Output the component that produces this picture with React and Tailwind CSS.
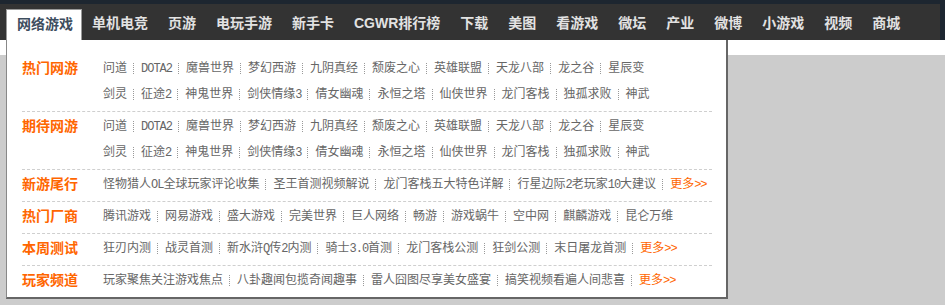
import React from 'react'

const NAV = ['单机电竞', '页游', '电玩手游', '新手卡', 'CGWR排行榜', '下载', '美图', '看游戏', '微坛', '产业', '微博', '小游戏', '视频', '商城']

const HOT_LINE1 = ['问道', 'DOTA2', '魔兽世界', '梦幻西游', '九阴真经', '颓废之心', '英雄联盟', '天龙八部', '龙之谷', '星辰变']
const HOT_LINE2 = ['剑灵', '征途2', '神鬼世界', '剑侠情缘3', '倩女幽魂', '永恒之塔', '仙侠世界', '龙门客栈', '独孤求败', '神武']

const SECTIONS = [
  { label: '热门网游', lines: [HOT_LINE1, HOT_LINE2] },
  { label: '期待网游', lines: [HOT_LINE1, HOT_LINE2] },
  { label: '新游尾行', lines: [['怪物猎人OL全球玩家评论收集', '圣王首测视频解说', '龙门客栈五大特色详解', '行星边际2老玩家10大建议']], more: true },
  { label: '热门厂商', lines: [['腾讯游戏', '网易游戏', '盛大游戏', '完美世界', '巨人网络', '畅游', '游戏蜗牛', '空中网', '麒麟游戏', '昆仑万维']] },
  { label: '本周测试', lines: [['狂刃内测', '战灵首测', '新水浒Q传2内测', '骑士3.0首测', '龙门客栈公测', '狂剑公测', '末日屠龙首测']], more: true },
  { label: '玩家频道', lines: [['玩家聚焦关注游戏焦点', '八卦趣闻包揽奇闻趣事', '雷人囧图尽享美女盛宴', '搞笑视频看遍人间悲喜']], more: true },
]

// latin runs are drawn half-width, like the old bitmap song typeface
function Txt({ s }) {
  return s.split(/([\x20-\x7e]+)/).filter(Boolean).map((p, i) =>
    /[\x20-\x7e]/.test(p)
      ? <span key={i} className="font-['Liberation_Mono'] text-[12px] tracking-[-1px]">{p}</span>
      : <span key={i}>{p}</span>
  )
}

function Sep() {
  return <span className="mx-[6px] w-[2px] h-[11px] border-l border-dotted border-[#999]" />
}

function Line({ items, more }) {
  return (
    <div className="flex items-center h-[26px] text-[12px] text-[#666] whitespace-nowrap">
      {items.map((it, i) => (
        <React.Fragment key={i}>
          {i > 0 && <Sep />}
          <span><Txt s={it} /></span>
        </React.Fragment>
      ))}
      {more && (
        <>
          <Sep />
          <span className="text-[#ff6600]"><Txt s="更多>>" /></span>
        </>
      )}
    </div>
  )
}

export default function App() {
  return (
    <div className="relative w-[945px] h-[305px] bg-[#1d2630] overflow-hidden font-['Liberation_Sans','Noto_Sans_CJK_SC',sans-serif]">
      {/* top strip + nav */}
      <div className="h-[4px]" />
      <nav className="w-[940px] h-[36px] bg-[#333333] flex items-end pl-[6px]">
        <a className="h-[31px] pl-[10px] pr-[8px] leading-[28px] bg-white border-t border-x border-[#999] text-[14px] font-bold text-[#3d4d5e]">网络游戏</a>
        {NAV.map(n => (
          <a key={n} className="h-[31px] px-[10px] leading-[28px] text-[14px] font-bold text-[#e2e2e2]">{n}</a>
        ))}
      </nav>
      <div className="h-[15px] bg-[#ffffff]" />
      <div className="h-[250px] bg-[#cccccc]" />

      {/* dropdown panel */}
      <div className="absolute left-[6px] top-[40px] w-[722px] bg-white border-l border-l-[#888] border-r-2 border-b-2 border-[#666] pt-[14px] pl-[15px] pr-[14px]">
        {SECTIONS.map((sec, i) => (
          <div key={i} className={`flex pt-[1px] pb-[4px] ${i > 0 ? 'border-t border-dashed border-[#cfcfcf]' : ''}`}>
            <div className="w-[81px] shrink-0 h-[26px] leading-[26px] text-[14px] font-bold text-[#ff6600]">{sec.label}</div>
            <div>
              {sec.lines.map((ln, j) => (
                <Line key={j} items={ln} more={sec.more && j === sec.lines.length - 1} />
              ))}
            </div>
          </div>
        ))}
      </div>
    </div>
  )
}
